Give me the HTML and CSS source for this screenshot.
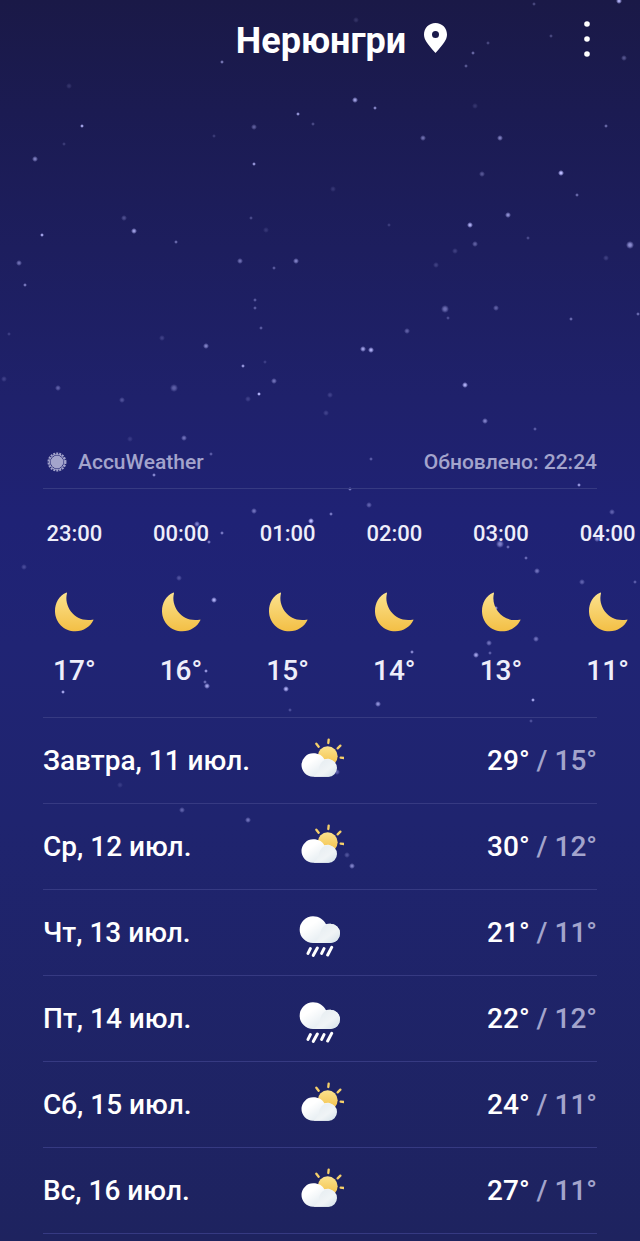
FILE: index.html
```html
<!DOCTYPE html>
<html lang="ru">
<head>
	<meta charset="utf-8">
	<meta name="viewport" content="width=device-width, initial-scale=1">
	<title>Нерюнгри</title>
	<link rel="stylesheet" href="styles.css">
</head>
<body>
<svg class="sky" id="sky" viewBox="0 0 640 1241" preserveAspectRatio="xMidYMin slice" aria-hidden="true">
	<defs>
		<radialGradient id="star">
			<stop offset="0.3" stop-color="#b9b9ff"/>
			<stop offset="1" stop-color="#b9b9ff" stop-opacity="0"/>
		</radialGradient>
		<linearGradient id="gold" x1="0" y1="0" x2="0" y2="1">
			<stop offset="0" stop-color="#fbe28e"/>
			<stop offset="1" stop-color="#f3bf45"/>
		</linearGradient>
		<linearGradient id="cloud" x1="0" y1="0" x2="1" y2="1">
			<stop offset="0.3" stop-color="#ffffff"/>
			<stop offset="1" stop-color="#d3e0e8"/>
		</linearGradient>
		<linearGradient id="puff" x1="0" y1="0" x2="1" y2="1">
			<stop offset="0" stop-color="#e4ebf0"/>
			<stop offset="0.6" stop-color="#f0f4f6"/>
			<stop offset="1" stop-color="#d3e0e8"/>
		</linearGradient>
		<symbol id="moon" viewBox="0 0 120 120">
			<path fill="url(#gold)" d="M36 2C15 11 3 32 3 57c0 34 27 61 61 61 25 0 45-14 54-33 1-2 0-3-2-2C66 93 28 46 39 4c0-2-1-3-3-2z"/>
		</symbol>
		<symbol id="partly" viewBox="0 0 144 144">
			<g stroke="#f6d06a" stroke-width="7" stroke-linecap="round">
				<path d="M61 20l7 9M98 8l-1 10M133 26l-8 8M134 62l10 1"/>
			</g>
			<circle cx="95" cy="58" r="30" fill="url(#gold)"/>
			<path fill="url(#cloud)" d="M52 49a35 35 0 0 0-1 70h46a27 27 0 0 0 3-53c-5-1-10 0-15 1-5-11-18-18-33-18z"/>
			<path fill="url(#puff)" d="M97 119a26 26 0 0 0 0-52c-15 0-25 11-28 26-2 10-8 20-16 26z"/>
		</symbol>
		<symbol id="rain" viewBox="0 0 144 144">
			<path fill="url(#cloud)" d="M51 22a40 40 0 0 0 0 80h52a29 29 0 0 0 0-58c-5 0-9 0-13 2-7-14-21-24-39-24z"/>
			<path fill="url(#puff)" d="M103 102a29 29 0 0 0 0-58c-17 0-27 12-30 27-2 12-9 23-19 31z"/>
			<path stroke="#fff" stroke-width="9" stroke-linecap="round" d="M43 119l-7 14M64 117l-12 22M84 119l-7 14M107 115l-12 23"/>
		</symbol>
	</defs>
</svg>

<header class="top">
	<h1>Нерюнгри
		<svg class="pin" viewBox="0 0 23 30" aria-hidden="true"><path fill="#fff" fill-rule="evenodd" d="M11.500 0C5 0 0 5 0 11.500c0 5 3 9 11.500 18.500C20 20.500 23 16.500 23 11.500 23 5 18 0 11.500 0zm0 8a3.500 3.500 0 1 1 0 7 3.500 3.500 0 0 1 0-7z"/></svg>
	</h1>
	<button class="menu" type="button" aria-label="Меню">
		<svg viewBox="0 0 6 36"><g fill="#fff"><circle cx="3" cy="3" r="2.800"/><circle cx="3" cy="18" r="2.800"/><circle cx="3" cy="33" r="2.800"/></g></svg>
	</button>
</header>

<main>
	<div class="source">
		<span class="provider">
			<svg viewBox="0 0 20 20" aria-hidden="true"><circle class="rays" cx="10" cy="10" r="8.500"/><circle class="ring" cx="10" cy="10" r="7.500"/><circle class="core" cx="10" cy="10" r="6.500"/></svg>
			AccuWeather
		</span>
		<span>Обновлено: 22:24</span>
	</div>

	<ul class="hours">
		<li><time>23:00</time><svg><use href="#moon"/></svg><b>17°</b></li>
		<li><time>00:00</time><svg><use href="#moon"/></svg><b>16°</b></li>
		<li><time>01:00</time><svg><use href="#moon"/></svg><b>15°</b></li>
		<li><time>02:00</time><svg><use href="#moon"/></svg><b>14°</b></li>
		<li><time>03:00</time><svg><use href="#moon"/></svg><b>13°</b></li>
		<li><time>04:00</time><svg><use href="#moon"/></svg><b>11°</b></li>
	</ul>

	<div class="days">
		<table>
			<tr><th scope="row">Завтра, 11 июл.</th><td class="icon"><svg><use href="#partly"/></svg></td><td class="temp">29° <span>/ 15°</span></td></tr>
			<tr><th scope="row">Ср, 12 июл.</th><td class="icon"><svg><use href="#partly"/></svg></td><td class="temp">30° <span>/ 12°</span></td></tr>
			<tr><th scope="row">Чт, 13 июл.</th><td class="icon"><svg><use href="#rain"/></svg></td><td class="temp">21° <span>/ 11°</span></td></tr>
			<tr><th scope="row">Пт, 14 июл.</th><td class="icon"><svg><use href="#rain"/></svg></td><td class="temp">22° <span>/ 12°</span></td></tr>
			<tr><th scope="row">Сб, 15 июл.</th><td class="icon"><svg><use href="#partly"/></svg></td><td class="temp">24° <span>/ 11°</span></td></tr>
			<tr><th scope="row">Вс, 16 июл.</th><td class="icon"><svg><use href="#partly"/></svg></td><td class="temp">27° <span>/ 11°</span></td></tr>
		</table>
	</div>
</main>
<script src="stars.js"></script>
</body>
</html>
```
FILE: styles.css
```css
* {box-sizing: border-box;}
body {position: relative; margin: 0; padding-bottom: 7px; color: #fff; font-family: Roboto, "Noto Sans", sans-serif; font-weight: 500; background: #1e225f linear-gradient(#1a1947 0%, #1b1b52 9%, #1d1e5e 20%, #1f216b 32%, #1f2275 42%, #202474 52%, #1f246f 66%, #1e235f 100%);}

.sky {position: absolute; top: 0; left: 0; z-index: -1; width: 100%; height: 100%;}

/* header */
.top {display: grid; grid-template-columns: 150px 1fr 107px; align-items: start; height: 80px; padding-top: 17px;}
.top h1 {grid-column: 2; display: flex; align-items: baseline; justify-content: center; gap: 18px; margin: 0; font-size: 36px; line-height: 48px; font-weight: 700;}
.top .pin {width: 23px; height: 30px;}
.top .menu {justify-self: center; padding: 4px 12px; border: 0; background: none; cursor: pointer;}
.top .menu svg {display: block; width: 6px; height: 36px;}

/* data source */
.source {display: flex; justify-content: space-between; margin: 354px 43px 0; padding: 13px 0 11px; font-size: 21px; line-height: 30px; color: #a3a4cc; border-bottom: 1px solid #363a82;}
.provider {display: flex; align-items: center; gap: 11px; padding-left: 4px;}
.provider svg {width: 20px; height: 20px;}
.provider .rays {fill: none; stroke: #a3a4cc; stroke-width: 2; stroke-dasharray: 2 1;}
.provider .ring {fill: none; stroke: #a3a4cc; stroke-width: 1;}
.provider .core {fill: #a3a4cc;}

/* hourly strip */
.hours {display: flex; margin: 0; padding: 30px 0 28px 21px; list-style: none; overflow-x: auto; scrollbar-width: none;}
.hours li {flex: 0 0 calc(100vw / 6); display: flex; flex-direction: column; align-items: center; color: #eeeefa;}
.hours time {font-size: 22px; line-height: 30px;}
.hours svg {width: 40px; height: 40px; margin: 43px 0 21px;}
.hours b {font-size: 28px; line-height: 36px; font-weight: 500;}

/* daily forecast */
.days {margin: 0 43px;}
.days table {width: 100%; table-layout: fixed; border-collapse: collapse; border-top: 1px solid #363a82; font-size: 28px; line-height: 36px;}
.days tr {height: 86px; border-bottom: 1px solid #363a82;}
.days th, .days td {padding: 0; font-weight: 500; white-space: nowrap;}
.days th {width: 40%; text-align: left;}
.days .icon {width: 20%; text-align: center;}
.days .icon svg {display: block; width: 48px; height: 48px; margin: 0 auto;}
.days .temp {text-align: right;}
.days .temp span {color: #a3a4cc;}
```
FILE: stars.js
```js
// x, y, radius, opacity
var stars = [
	[222, 62, 2, .6], [356, 20, 3, .15], [473, 53, 2, .5], [466, 66, 2, .4], [488, 43, 2, .3], [534, 4, 2, .3], [551, 36, 2, .3], [619, 1, 3, .9], [624, 58, 3, .35],
	[82, 126, 2, .9], [64, 144, 2, .2], [35, 159, 3, .6], [69, 86, 3, .15], [298, 114, 2, .8], [254, 127, 3, .4], [214, 136, 2, .2], [313, 124, 2, .3], [254, 164, 2, .8],
	[42, 235, 2, .9], [124, 218, 3, .3], [134, 231, 3, .8], [176, 242, 2, .5], [19, 263, 3, .5], [251, 218, 2, .3], [266, 230, 3, .15], [240, 261, 3, .5], [296, 261, 3, .6], [274, 268, 2, .4],
	[355, 100, 3, .8], [375, 108, 2, .7], [475, 106, 3, .15], [423, 138, 3, .5], [500, 138, 3, .6], [606, 126, 2, .5], [482, 174, 3, .35], [561, 173, 3, 1], [577, 195, 2, .5], [333, 189, 3, .15],
	[508, 215, 3, .7], [470, 225, 3, .9], [475, 244, 3, .4], [455, 251, 3, .2], [436, 265, 3, .2], [389, 225, 2, .2], [528, 238, 2, .3], [630, 245, 4, .7], [606, 258, 3, .2],
	[25, 285, 2, .6], [255, 300, 2, .4], [255, 308, 2, .4], [261, 328, 2, .4], [206, 346, 3, .6], [162, 338, 3, .2], [243, 366, 2, .8], [274, 381, 3, .5], [259, 394, 2, 1], [248, 399, 3, .2], [265, 362, 2, .2],
	[58, 388, 3, .4], [122, 400, 3, .3], [174, 388, 4, .4], [4, 379, 3, .2], [184, 438, 3, .5], [130, 439, 3, .15], [9, 334, 2, .2],
	[445, 309, 4, .5], [448, 318, 2, .3], [496, 308, 3, .4], [407, 331, 3, .4], [571, 319, 2, .5], [638, 314, 2, .5], [363, 349, 3, .8], [371, 350, 3, .9], [465, 385, 3, .9], [485, 421, 3, .6], [535, 429, 2, .4], [330, 395, 3, .2], [326, 413, 3, .2],
	[154, 475, 2, .7], [211, 454, 2, .4], [371, 459, 2, .4], [350, 489, 2, .6], [579, 485, 2, .8], [369, 505, 3, .4], [254, 511, 3, .5], [311, 521, 3, 1], [331, 514, 2, .6], [612, 512, 3, .4], [197, 524, 3, .6], [222, 533, 2, .6], [209, 542, 2, .6], [24, 567, 3, .25],
	[500, 544, 4, .6], [508, 547, 2, .5], [526, 558, 2, .5], [597, 539, 3, .6], [537, 571, 3, .5], [582, 582, 3, .4], [635, 582, 2, .4], [179, 578, 3, .3], [214, 600, 3, .9], [496, 608, 2, .7],
	[489, 643, 3, .5], [536, 639, 3, .5], [476, 655, 3, .8], [490, 653, 2, .4], [412, 652, 2, .7], [206, 671, 2, .8], [205, 682, 2, .5], [207, 686, 3, .8], [286, 689, 3, .9], [63, 692, 2, .9], [378, 704, 3, .7], [533, 700, 2, .9], [290, 710, 2, .3],
	[337, 772, 3, .4], [120, 785, 3, .15], [182, 810, 3, .4], [248, 820, 3, .5], [347, 855, 3, .3], [352, 866, 3, .6], [531, 721, 2, .3]
];

var sky = document.getElementById('sky');
for(var i = 0, len = stars.length; i < len; i++) {
	var star = document.createElementNS('http://www.w3.org/2000/svg', 'circle');
	star.setAttribute('cx', stars[i][0]);
	star.setAttribute('cy', stars[i][1]);
	star.setAttribute('r', stars[i][2]);
	star.setAttribute('opacity', stars[i][3]);
	star.setAttribute('fill', 'url(#star)');
	sky.appendChild(star);
}
```
